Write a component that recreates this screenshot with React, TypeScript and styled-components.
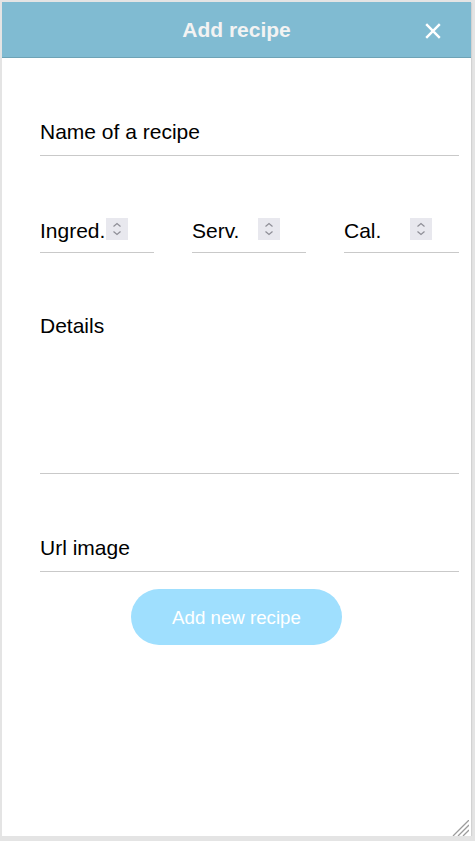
import React from "react";
import styled, { createGlobalStyle } from "styled-components";

const Global = createGlobalStyle`
  html, body {
    margin: 0;
    padding: 0;
    background: #e4e4e4;
  }
  * { box-sizing: border-box; }
`;

const Panel = styled.div`
  position: relative;
  margin: 2px 0 0 2px;
  width: 469px;
  height: 834px;
  background: #ffffff;
  overflow: hidden;
  box-shadow: 1px 1px 1px rgba(0, 0, 0, 0.08);
  font-family: "Liberation Sans", Arial, sans-serif;
  display: flex;
  flex-direction: column;
`;

const Grip = styled.span`
  position: absolute;
  right: 2px;
  bottom: 0;
  width: 17px;
  height: 16px;
  display: flex;
`;

const Header = styled.header`
  position: relative;
  height: 56px;
  flex: none;
  background: #80bbd2;
  border-bottom: 1px solid #6ea3b6;
  display: flex;
  align-items: center;
  justify-content: center;
`;

const Title = styled.h1`
  margin: 0;
  font-size: 21px;
  font-weight: 700;
  color: #f3f3f3;
  line-height: 1;
`;

const Close = styled.button`
  position: absolute;
  right: 30px;
  top: 21px;
  width: 16px;
  height: 16px;
  padding: 0;
  border: none;
  background: transparent;
  display: flex;
  cursor: pointer;
`;

const Form = styled.form`
  display: flex;
  flex-direction: column;
`;

const inputBase = `
  display: block;
  width: 100%;
  border: none;
  border-bottom: 1px solid #c9c9c9;
  outline: none;
  background: transparent;
  font-family: "Liberation Sans", Arial, sans-serif;
  font-size: 21px;
  line-height: 22px;
  color: #000;
  &::placeholder { color: #000; opacity: 1; }
`;

const TextInput = styled.input<{ $padTop: number; $padBottom: number }>`
  ${inputBase}
  margin: 0;
  padding: ${(p) => p.$padTop}px 0 ${(p) => p.$padBottom}px;
  height: ${(p) => p.$padTop + p.$padBottom + 23}px;
`;

const FieldWrap = styled.div<{ $top: number }>`
  margin: ${(p) => p.$top}px 12px 0 38px;
`;

const NumberRow = styled.div`
  margin: 52px 12px 0 38px;
  display: grid;
  grid-template-columns: 114px 114px 115px;
  column-gap: 38px;
`;

const NumberField = styled.div`
  display: flex;
  align-items: flex-start;
  border-bottom: 1px solid #c9c9c9;
  height: 45px;
  padding-top: 10px;
`;

const NumberInput = styled.input`
  ${inputBase}
  border-bottom: none;
  width: 66px;
  flex: none;
  padding: 2px 0 0;
  height: 24px;
`;

const Spinner = styled.span`
  flex: none;
  width: 22px;
  height: 22px;
  background: #e8e8ee;
  display: flex;
  align-items: center;
  justify-content: center;
`;

const Details = styled.textarea`
  ${inputBase}
  resize: none;
  height: 171px;
  padding: 12px 0 0;
  margin: 0;
`;

const ButtonRow = styled.div`
  margin-top: 17px;
  display: flex;
  justify-content: center;
`;

const Submit = styled.button`
  width: 211px;
  height: 56px;
  border: none;
  border-radius: 28px;
  background: #9fdffe;
  color: #ffffff;
  font-family: "Liberation Sans", Arial, sans-serif;
  font-size: 18.7px;
  padding: 1px 0 0;
  cursor: pointer;
`;

const SpinIcon = () => (
  <svg width="22" height="22" viewBox="0 0 22 22" fill="none">
    <path d="M7.5 8.5 L11 5.5 L14.5 8.5" stroke="#8e8e96" strokeWidth="1.2" />
    <path d="M7.5 13.5 L11 16.5 L14.5 13.5" stroke="#8e8e96" strokeWidth="1.2" />
  </svg>
);

const CloseIcon = () => (
  <svg width="16" height="16" viewBox="0 0 16 16" fill="none">
    <path d="M1.2 1.2 L14.8 14.8 M14.8 1.2 L1.2 14.8" stroke="#ffffff" strokeWidth="2.4" />
  </svg>
);

const GripIcon = () => (
  <svg width="17" height="16" viewBox="0 0 17 16" fill="none">
    <path d="M17 0 L1 16 M17 5 L6 16 M17 10 L11 16" stroke="#9c9c9c" strokeWidth="1.3" />
  </svg>
);

const numberFields = ["Ingred.", "Serv.", "Cal."];

export default function App() {
  return (
    <>
      <Global />
      <Panel>
        <Header>
          <Title>Add recipe</Title>
          <Close type="button" aria-label="Close">
            <CloseIcon />
          </Close>
        </Header>
        <Form onSubmit={(e) => e.preventDefault()}>
          <FieldWrap $top={51}>
            <TextInput $padTop={12} $padBottom={12} placeholder="Name of a recipe" />
          </FieldWrap>
          <NumberRow>
            {numberFields.map((f) => (
              <NumberField key={f}>
                <NumberInput placeholder={f} />
                <Spinner>
                  <SpinIcon />
                </Spinner>
              </NumberField>
            ))}
          </NumberRow>
          <FieldWrap $top={50}>
            <Details placeholder="Details" />
          </FieldWrap>
          <FieldWrap $top={53}>
            <TextInput $padTop={10} $padBottom={12} placeholder="Url image" />
          </FieldWrap>
          <ButtonRow>
            <Submit type="submit">Add new recipe</Submit>
          </ButtonRow>
        </Form>
        <Grip aria-hidden="true">
          <GripIcon />
        </Grip>
      </Panel>
    </>
  );
}
